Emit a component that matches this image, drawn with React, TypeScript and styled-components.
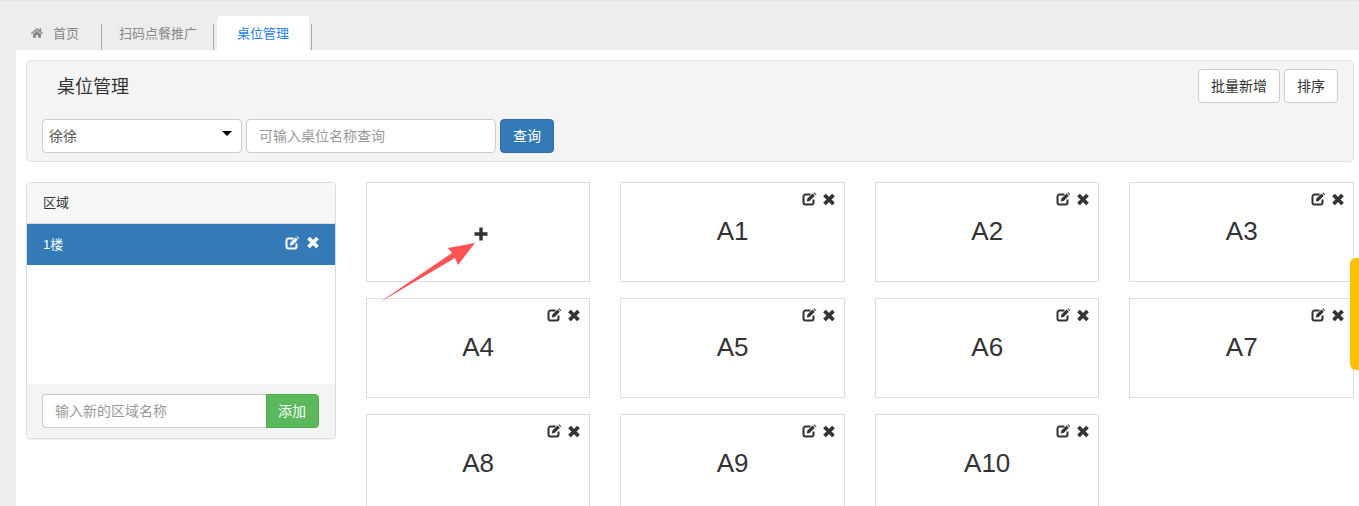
import styled, { createGlobalStyle } from "styled-components";
import { FaHome } from "react-icons/fa";

const tables = ["A1", "A2", "A3", "A4", "A5", "A6", "A7", "A8", "A9", "A10"];

const EditIcon = () => (
  <svg width="15" height="14" viewBox="0 0 15 14">
    <path
      d="M8.5 2.5H3.5A2 2 0 0 0 1.5 4.5V10.5A2 2 0 0 0 3.5 12.5H9.5A2 2 0 0 0 11.5 10.5V7.5"
      fill="none"
      stroke="currentColor"
      strokeWidth="2"
    />
    <path d="M4.8 9.4 L5.4 6.6 L10.6 1.6 L12.8 3.8 L7.6 8.9 Z M11.4 0.9 L12.2 0.2 L14.4 2.4 L13.6 3.1 Z" fill="currentColor" />
  </svg>
);

const RemoveIcon = () => (
  <svg width="12" height="13" viewBox="0 0 12 13">
    <path d="M1.5 2 L10.5 11 M10.5 2 L1.5 11" fill="none" stroke="currentColor" strokeWidth="3.8" />
  </svg>
);

const App = () => {
  return (
    <>
      <GlobalStyle />
      <Page>
        <TabBar>
          <HomeTab>
            <FaHome size={12} />
            首页
          </HomeTab>
          <Tab>扫码点餐推广</Tab>
          <ActiveTab>桌位管理</ActiveTab>
        </TabBar>
        <Content>
          <Panel>
            <PanelTop>
              <Title>桌位管理</Title>
              <Buttons>
                <Button>批量新增</Button>
                <Button>排序</Button>
              </Buttons>
            </PanelTop>
            <SearchRow>
              <SelectBox>
                徐徐
                <Caret />
              </SelectBox>
              <SearchInput placeholder="可输入桌位名称查询" />
              <QueryButton>查询</QueryButton>
            </SearchRow>
          </Panel>
          <Main>
            <AreaCard>
              <AreaHeader>区域</AreaHeader>
              <AreaItem>
                1楼
                <ItemIcons>
                  <EditIcon />
                  <RemoveIcon />
                </ItemIcons>
              </AreaItem>
              <AreaBody />
              <AreaFooter>
                <AreaInput placeholder="输入新的区域名称" />
                <AddButton>添加</AddButton>
              </AreaFooter>
            </AreaCard>
            <TableGrid>
              <TableCard>
                <PlusIcon width="14" height="14" viewBox="0 0 14 14">
                  <path d="M7 0.5 V13.5 M0.5 7 H13.5" fill="none" stroke="#333" strokeWidth="3.4" />
                </PlusIcon>
              </TableCard>
              {tables.map((name) => (
                <TableCard key={name}>
                  <CardIcons>
                    <EditIcon />
                    <RemoveIcon />
                  </CardIcons>
                  <TableName>{name}</TableName>
                </TableCard>
              ))}
            </TableGrid>
          </Main>
        </Content>
        <Arrow width="110" height="75" viewBox="0 0 110 75">
          <path d="M1.5 63 L75 13 L71 8 L98 3 L81 25 L78 18 Z" fill="#ff5252" />
        </Arrow>
        <SideHandle />
      </Page>
    </>
  );
};

const GlobalStyle = createGlobalStyle`
  html, body {
    margin: 0;
    height: 506px;
    overflow: hidden;
  }
  body {
    font-family: "Liberation Sans", "Noto Sans CJK SC", sans-serif;
    font-size: 13px;
    color: #333;
  }
  * {
    box-sizing: border-box;
  }
`;

const Page = styled.div`
  position: relative;
  display: flex;
  flex-direction: column;
  height: 506px;
  padding-left: 16px;
  background: #ededed;
  border-top: 1px solid #e5e5e5;
  overflow: hidden;
`;

const TabBar = styled.div`
  flex: none;
  display: flex;
  align-items: flex-end;
  height: 49px;
`;

const Tab = styled.div`
  display: flex;
  align-items: center;
  height: 26px;
  padding: 0 16px 10px 17px;
  color: #888;
  font-size: 13px;
  border-right: 1px solid #a8a8a8;
`;

const HomeTab = styled(Tab)`
  gap: 10px;
  width: 86px;
  padding-left: 15px;

  svg {
    margin-top: 2px;
  }
`;

const ActiveTab = styled(Tab)`
  position: relative;
  height: 34px;
  margin-left: 3px;
  padding: 0 20px 2px;
  width: 95px;
  color: #1f7fe5;
  border-right: none;
  background: linear-gradient(to right, #fff 92px, transparent 92px);
  border-radius: 4px 4px 0 0;

  &::after {
    content: "";
    position: absolute;
    right: 0;
    bottom: 0;
    height: 26px;
    border-right: 1px solid #a8a8a8;
  }
`;

const Content = styled.div`
  flex: none;
  height: 520px;
  padding: 10px 5px 0 10px;
  background: #fff;
`;

const Panel = styled.div`
  height: 102px;
  padding: 8px 15px 0 15px;
  background: #f4f4f4;
  border: 1px solid #e3e3e3;
  border-radius: 4px;
`;

const PanelTop = styled.div`
  display: flex;
  justify-content: space-between;
  align-items: center;
  height: 34px;
`;

const Title = styled.div`
  padding: 0 0 3px 15px;
  font-size: 18px;
  color: #333;
`;

const Buttons = styled.div`
  display: flex;
  gap: 4px;
`;

const Button = styled.button`
  height: 34px;
  padding: 0 12px 2px;
  font: inherit;
  font-size: 14px;
  color: #333;
  background: #fff;
  border: 1px solid #ccc;
  border-radius: 4px;
`;

const SearchRow = styled.div`
  display: flex;
  gap: 4px;
  margin-top: 16px;
`;

const SelectBox = styled.div`
  position: relative;
  display: flex;
  align-items: center;
  width: 200px;
  height: 34px;
  padding: 0 0 3px 6px;
  font-size: 14px;
  color: #555;
  background: #fff;
  border: 1px solid #ccc;
  border-radius: 4px;
`;

const Caret = styled.span`
  position: absolute;
  right: 9px;
  top: 11px;
  border-left: 5px solid transparent;
  border-right: 5px solid transparent;
  border-top: 5px solid #000;
`;

const SearchInput = styled.input`
  width: 250px;
  height: 34px;
  padding: 0 12px;
  font: inherit;
  font-size: 14px;
  color: #555;
  background: #fff;
  border: 1px solid #ccc;
  border-radius: 4px;
  outline: none;

  &::placeholder {
    color: #999;
  }
`;

const QueryButton = styled(Button)`
  color: #fff;
  background: #337ab7;
  border-color: #2e6da4;
`;

const Main = styled.div`
  display: flex;
  gap: 29.9px;
  margin-top: 20px;
`;

const AreaCard = styled.div`
  display: flex;
  flex-direction: column;
  flex: none;
  width: 310px;
  height: 257px;
  background: #fff;
  border: 1px solid #ddd;
  border-radius: 4px;
  box-shadow: 0 1px 1px rgba(0, 0, 0, 0.05);
  overflow: hidden;
`;

const AreaHeader = styled.div`
  display: flex;
  align-items: center;
  height: 41px;
  padding: 0 0 4px 16px;
  background: #f7f7f7;
  border-bottom: 1px solid #ddd;
`;

const AreaItem = styled.div`
  display: flex;
  align-items: center;
  justify-content: space-between;
  height: 41px;
  padding: 0 16px 2px;
  color: #fff;
  background: #337ab7;
`;

const ItemIcons = styled.div`
  display: flex;
  align-items: center;
  gap: 7px;
  margin-bottom: 2px;
`;

const AreaBody = styled.div`
  flex: 1;
`;

const AreaFooter = styled.div`
  display: flex;
  height: 54px;
  padding: 10px 16px 10px 15px;
  background: #f4f4f4;
`;

const AreaInput = styled(SearchInput)`
  flex: 1;
  width: auto;
  min-width: 0;
  border-radius: 4px 0 0 4px;
  border-right: none;
`;

const AddButton = styled(Button)`
  width: 53px;
  padding: 0 1px 2px 0;
  color: #fff;
  background: #5cb85c;
  border-color: #4cae4c;
  border-radius: 0 4px 4px 0;
`;

const TableGrid = styled.div`
  flex: 1;
  display: grid;
  grid-template-columns: repeat(4, 1fr);
  grid-auto-rows: 100px;
  gap: 16px 30px;
`;

const TableCard = styled.div`
  position: relative;
  display: flex;
  align-items: center;
  justify-content: center;
  background: #fff;
  border: 1px solid #ddd;
`;

const PlusIcon = styled.svg`
  transform: translate(3px, 2px);
`;

const CardIcons = styled.div`
  position: absolute;
  top: 9px;
  right: 9px;
  display: flex;
  align-items: center;
  gap: 6px;
  color: #333;
`;

const TableName = styled.div`
  margin-top: -1px;
  font-size: 26px;
  color: #333;
`;

const Arrow = styled.svg`
  position: absolute;
  left: 377px;
  top: 239px;
`;

const SideHandle = styled.div`
  position: absolute;
  right: 0;
  top: 257px;
  width: 9px;
  height: 112px;
  background: #ffc000;
  border-radius: 6px 0 0 6px;
`;

export default App;
